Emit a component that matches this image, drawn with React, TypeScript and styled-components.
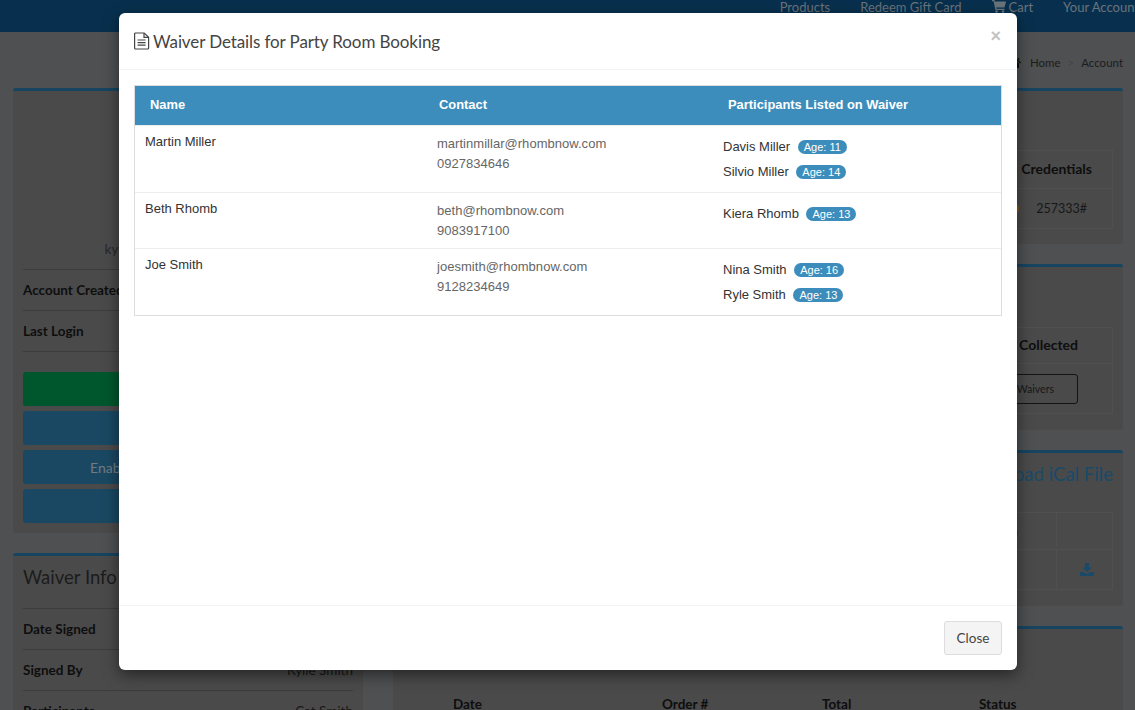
import React from "react";
import styled, { createGlobalStyle } from "styled-components";

const Global = createGlobalStyle`
  html, body { margin: 0; padding: 0; height: 710px; overflow: hidden; }
  body { font-family: "Lato", "Open Sans", sans-serif; font-size: 14px; color: #333; background: #4e5052; }
  * { box-sizing: border-box; }
`;

const Page = styled.div`
  height: 710px;
  overflow: hidden;
  position: relative;
`;
const Nav = styled.nav`
  height: 32px;
  background: #08304e;
  display: flex;
  justify-content: flex-end;
  gap: 30px;
  overflow: hidden;
  margin-right: -4px;
`;
const NavLink = styled.a`
  color: #68737b;
  font-size: 13px;
  line-height: 15px;
  white-space: nowrap;
  display: flex;
  gap: 3px;
  height: 15px;
  align-items: flex-start;
`;
const Crumbs = styled.div`
  height: 56px;
  display: flex;
  justify-content: flex-end;
  align-items: center;
  gap: 7px;
  padding: 4px 12px 0 0;
  font-size: 11.5px;
  color: #1c1c1c;
`;
const Sep = styled.span`
  color: #444;
`;
const Columns = styled.div`
  display: grid;
  grid-template-columns: 350px 730px;
  gap: 30px;
  padding: 0 12px 0 13px;
  align-items: start;
`;
const Stack = styled.div`
  display: flex;
  flex-direction: column;
`;
const Panel = styled.section<{ $h: number }>`
  background: #4a4a4a;
  border-top: 3px solid #174460;
  border-radius: 3px;
  height: ${(p) => p.$h}px;
  margin-bottom: 20px;
  padding: 0 10px;
  overflow: hidden;
`;
const User = styled.div`
  height: 178px;
  padding-bottom: 12px;
  display: flex;
  align-items: flex-end;
  justify-content: center;
  font-size: 13.5px;
  color: #262626;
`;
const InfoRow = styled.div`
  height: 41px;
  display: flex;
  justify-content: space-between;
  align-items: center;
  border-top: 1px solid #3c3c3c;
  color: #181818;
  font-size: 13.5px;
`;
const Divider = styled.div`
  border-top: 1px solid #3c3c3c;
  height: 21px;
`;
const Strong = styled.b`
  color: #0e0e0e;
`;
const Btn = styled.div<{ $c: string }>`
  height: 34px;
  background: ${(p) => p.$c};
  border-radius: 3px;
  margin-bottom: 5px;
  color: #727c83;
  font-size: 14px;
  display: flex;
  align-items: center;
  padding-left: 67px;
`;
const Heading = styled.h3`
  margin: 0;
  height: 52px;
  font-weight: 400;
  font-size: 18.5px;
  line-height: 42px;
  color: #1c1c1c;
`;
const ColHeads = styled.div`
  display: grid;
  grid-template-columns: 209px 160px 157px 100px;
  margin-top: 67px;
  padding-left: 50px;
  font-weight: 700;
  color: #0e0e0e;
  font-size: 13.5px;
`;
const Inner = styled.div<{ $top: number }>`
  margin-top: ${(p) => p.$top}px;
  border: 1px solid #505050;
  display: grid;
`;
const InnerHead = styled.div<{ $h: number }>`
  height: ${(p) => p.$h}px;
  display: flex;
  justify-content: flex-end;
  align-items: center;
  font-weight: 700;
  color: #0e0e0e;
  font-size: 14px;
  padding-bottom: 2px;
  border-bottom: 1px solid #505050;
`;
const InnerCell = styled.div<{ $h: number }>`
  height: ${(p) => p.$h}px;
  display: flex;
  justify-content: flex-end;
  align-items: center;
  color: #181818;
  font-size: 12.5px;
`;
const CredHead = styled.span`
  margin-right: 20px;
`;
const CollectedHead = styled.span`
  margin-right: 34px;
`;
const Dot = styled.span`
  width: 13px;
  height: 13px;
  border-radius: 50%;
  background: #8a590d;
  margin-right: 17px;
`;
const Code = styled.span`
  margin-right: 25px;
`;
const Ghost = styled.span`
  border: 1px solid #141414;
  border-radius: 3px;
  font-size: 10.5px;
  height: 30px;
  padding: 0 23px 0 60px;
  margin-right: 34px;
  display: flex;
  align-items: center;
  color: #181818;
`;
const Ical = styled.h3`
  margin: 0;
  height: 59px;
  padding-top: 10px;
  text-align: right;
  font-weight: 400;
  font-size: 18.6px;
  color: #194a69;
`;
const LocationHead = styled.span`
  margin-right: 38px;
`;
const Action = styled.div`
  width: 56px;
  height: 100%;
  border-left: 1px solid #505050;
  display: flex;
  align-items: center;
  justify-content: center;
  padding-left: 4px;
`;
const Modal = styled.div`
  position: absolute;
  z-index: 20;
  left: 119px;
  top: 13px;
  width: 898px;
  height: 657px;
  background: #fff;
  border-radius: 6px;
  box-shadow: 0 5px 15px rgba(0, 0, 0, 0.5);
  display: flex;
  flex-direction: column;
`;
const ModalHeader = styled.header`
  height: 57px;
  border-bottom: 1px solid #f4f4f4;
  display: flex;
  align-items: center;
  padding: 0 15px;
  position: relative;
`;
const Title = styled.h4`
  margin: 0;
  font-size: 17px;
  letter-spacing: -0.1px;
  font-weight: 400;
  color: #444;
  display: flex;
  align-items: center;
  gap: 3px;
`;
const CloseX = styled.span`
  position: absolute;
  right: 16px;
  top: 12px;
  font-family: "Liberation Sans", sans-serif;
  font-weight: 700;
  font-size: 18px;
  line-height: 22px;
  color: #c4c4c4;
`;
const ModalBody = styled.div`
  flex: 1;
  padding: 15px;
`;
const TableBox = styled.div`
  border: 1px solid #ddd;
  font-family: "Liberation Sans", Arial, sans-serif;
  font-size: 13px;
`;
const HeadRow = styled.div`
  height: 39px;
  background: #3c8dbc;
  display: grid;
  grid-template-columns: 289px 289px 288px;
  align-items: center;
  color: #fff;
  font-weight: 700;
  font-size: 12.9px;
  padding: 0 0 2px 15px;
`;
const Row = styled.div<{ $h: number }>`
  height: ${(p) => p.$h}px;
  display: grid;
  grid-template-columns: 292px 286px 288px;
  padding-left: 10px;
  border-top: 1px solid #eee;
  &:first-of-type { border-top: 0; }
`;
const NameCell = styled.div`
  padding-top: 8px;
  color: #333;
  line-height: 15px;
`;
const ContactCell = styled.div`
  padding-top: 8px;
  color: #666;
  line-height: 20px;
  letter-spacing: 0.03px;
`;
const Participants = styled.div`
  padding-top: 8px;
  color: #333;
`;
const Person = styled.div`
  height: 25px;
  display: flex;
  align-items: center;
  gap: 7.6px;
`;
const Badge = styled.span`
  background: #3c8dbc;
  color: #fff;
  font-size: 11px;
  line-height: 14px;
  height: 14px;
  border-radius: 10px;
  padding: 0 6px;
`;
const ModalFooter = styled.footer`
  height: 65px;
  border-top: 1px solid #f4f4f4;
  display: flex;
  justify-content: flex-end;
  align-items: flex-start;
  padding: 15px;
`;
const CloseButton = styled.button`
  height: 34px;
  width: 58px;
  background: #f4f4f4;
  border: 1px solid #ddd;
  border-radius: 3px;
  font-family: inherit;
  font-size: 13.5px;
  color: #444;
  padding: 0;
`;
const HomeGlyph = styled.svg`
  margin-right: 2px;
`;

const FileIcon = () => (
  <svg width="16" height="18" viewBox="0 0 16 18" fill="none" stroke="#444" strokeWidth="1.2">
    <path d="M1.6 1h8.6L14.6 5.2V16a1 1 0 0 1-1 1H1.6a1 1 0 0 1-1-1V2a1 1 0 0 1 1-1Z" />
    <path d="M10 1v4.4h4.6M3.6 8h8M3.6 10.6h8M3.6 13.2h8" />
  </svg>
);
const CartIcon = () => (
  <svg width="14" height="13" viewBox="0 0 14 13" fill="#68737b">
    <path d="M0 0h2.4l.4 1.6H14l-1.5 6H4.2l.3 1.2h8v1.2H3.4L1.6 1.2H0Z" />
    <circle cx="4.6" cy="11.6" r="1.3" />
    <circle cx="11" cy="11.6" r="1.3" />
  </svg>
);
const DownloadIcon = () => (
  <svg width="14" height="13" viewBox="0 0 14 13" fill="#194a69">
    <path d="M5 0h4v4.5h2.6L7 9 2.4 4.5H5ZM0 9h3.2L7 11l3.8-2H14v4H0Z" />
  </svg>
);
const HomeIcon = () => (
  <HomeGlyph width="13" height="11" viewBox="0 0 13 11" fill="#0e0e0e">
    <path d="M6.5 0 13 5.6l-.8.9L6.5 1.6.8 6.5 0 5.6ZM2 6.6l4.5-3.9L11 6.6V11H7.6V7.8H5.4V11H2ZM9.6 1h1.6v2.4L9.6 2Z" />
  </HomeGlyph>
);

const waivers = [
  { h: 67, name: "Martin Miller", email: "martinmillar@rhombnow.com", phone: "0927834646", people: [["Davis Miller", 11], ["Silvio Miller", 14]] },
  { h: 56, name: "Beth Rhomb", email: "beth@rhombnow.com", phone: "9083917100", people: [["Kiera Rhomb", 13]] },
  { h: 67, name: "Joe Smith", email: "joesmith@rhombnow.com", phone: "9128234649", people: [["Nina Smith", 16], ["Ryle Smith", 13]] },
];

export default function App() {
  return (
    <Page>
      <Global />
      <Nav>
        <NavLink>Products</NavLink>
        <NavLink>Redeem Gift Card</NavLink>
        <NavLink><CartIcon />Cart</NavLink>
        <NavLink>Your Account</NavLink>
      </Nav>
      <Crumbs>
        <HomeIcon />
        <span>Home</span>
        <Sep>&gt;</Sep>
        <span>Account</span>
      </Crumbs>
      <Columns>
        <Stack>
          <Panel $h={445}>
            <User>kylie.smith@rhombnow.com</User>
            <InfoRow><Strong>Account Created</Strong></InfoRow>
            <InfoRow><Strong>Last Login</Strong></InfoRow>
            <Divider />
            <Btn $c="#00572d" />
            <Btn $c="#1a4862" />
            <Btn $c="#1a4862">Enable Notifications</Btn>
            <Btn $c="#1a4862" />
          </Panel>
          <Panel $h={300}>
            <Heading>Waiver Info</Heading>
            <InfoRow><Strong>Date Signed</Strong></InfoRow>
            <InfoRow><Strong>Signed By</Strong><span>Kylie Smith</span></InfoRow>
            <InfoRow><Strong>Participants</Strong><span>Cat Smith</span></InfoRow>
          </Panel>
        </Stack>
        <Stack>
          <Panel $h={156}>
            <Inner $top={59}>
              <InnerHead $h={38}><CredHead>Credentials</CredHead></InnerHead>
              <InnerCell $h={39}><Dot /><Code>257333#</Code></InnerCell>
            </Inner>
          </Panel>
          <Panel $h={166}>
            <Inner $top={60}>
              <InnerHead $h={36}><CollectedHead>Collected</CollectedHead></InnerHead>
              <InnerCell $h={49}><Ghost>Waivers</Ghost></InnerCell>
            </Inner>
          </Panel>
          <Panel $h={156}>
            <Ical>Download iCal File</Ical>
            <Inner $top={0}>
              <InnerHead $h={37}><LocationHead>Location</LocationHead><Action /></InnerHead>
              <InnerCell $h={39}><Action><DownloadIcon /></Action></InnerCell>
            </Inner>
          </Panel>
          <Panel $h={200}>
            <ColHeads>
              <span>Date</span>
              <span>Order #</span>
              <span>Total</span>
              <span>Status</span>
            </ColHeads>
          </Panel>
        </Stack>
      </Columns>
      <Modal>
        <ModalHeader>
          <Title><FileIcon />Waiver Details for Party Room Booking</Title>
          <CloseX>×</CloseX>
        </ModalHeader>
        <ModalBody>
          <TableBox>
            <HeadRow>
              <span>Name</span>
              <span>Contact</span>
              <span>Participants Listed on Waiver</span>
            </HeadRow>
            {waivers.map((w) => (
              <Row key={w.name} $h={w.h}>
                <NameCell>{w.name}</NameCell>
                <ContactCell>{w.email}<br />{w.phone}</ContactCell>
                <Participants>
                  {w.people.map(([n, a]) => (
                    <Person key={n as string}>{n}<Badge>Age: {a}</Badge></Person>
                  ))}
                </Participants>
              </Row>
            ))}
          </TableBox>
        </ModalBody>
        <ModalFooter>
          <CloseButton>Close</CloseButton>
        </ModalFooter>
      </Modal>
    </Page>
  );
}
